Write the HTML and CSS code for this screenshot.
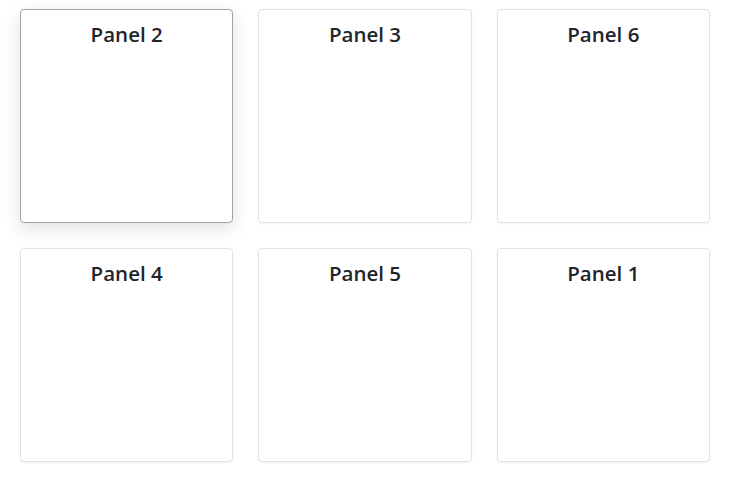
FILE: index.html
```html
<!DOCTYPE html>
<html lang="en">
<head>
<meta charset="utf-8">
<title>Panels</title>
<link rel="stylesheet" href="styles.css">
</head>
<body>
<div class="grid">
  <div class="panel panel-active"><h2 class="panel-title">Panel 2</h2></div>
  <div class="panel"><h2 class="panel-title">Panel 3</h2></div>
  <div class="panel"><h2 class="panel-title">Panel 6</h2></div>
  <div class="panel"><h2 class="panel-title">Panel 4</h2></div>
  <div class="panel"><h2 class="panel-title">Panel 5</h2></div>
  <div class="panel"><h2 class="panel-title">Panel 1</h2></div>
</div>
</body>
</html>
```
FILE: styles.css
```css
html, body {
  margin: 0;
  padding: 0;
  background: #ffffff;
}
body {
  font-family: "Open Sans", "Noto Sans", sans-serif;
  color: #212529;
}
.grid {
  display: grid;
  grid-template-columns: repeat(3, 1fr);
  grid-auto-rows: 214px;
  gap: 25px;
  padding: 9px 20px;
}
.panel {
  box-sizing: border-box;
  background: #fff;
  border: 1px solid #e2e2e2;
  border-radius: 4px;
  box-shadow: 0 1px 3px rgba(0, 0, 0, 0.05);
}
.panel-active {
  border-color: #a3a3a3;
  box-shadow: 0 6px 18px rgba(0, 0, 0, 0.12);
}
.panel-title {
  margin: 0;
  padding-top: 10px;
  text-align: center;
  font-size: 20.5px;
  font-weight: 560;
  line-height: 28px;
}
```
